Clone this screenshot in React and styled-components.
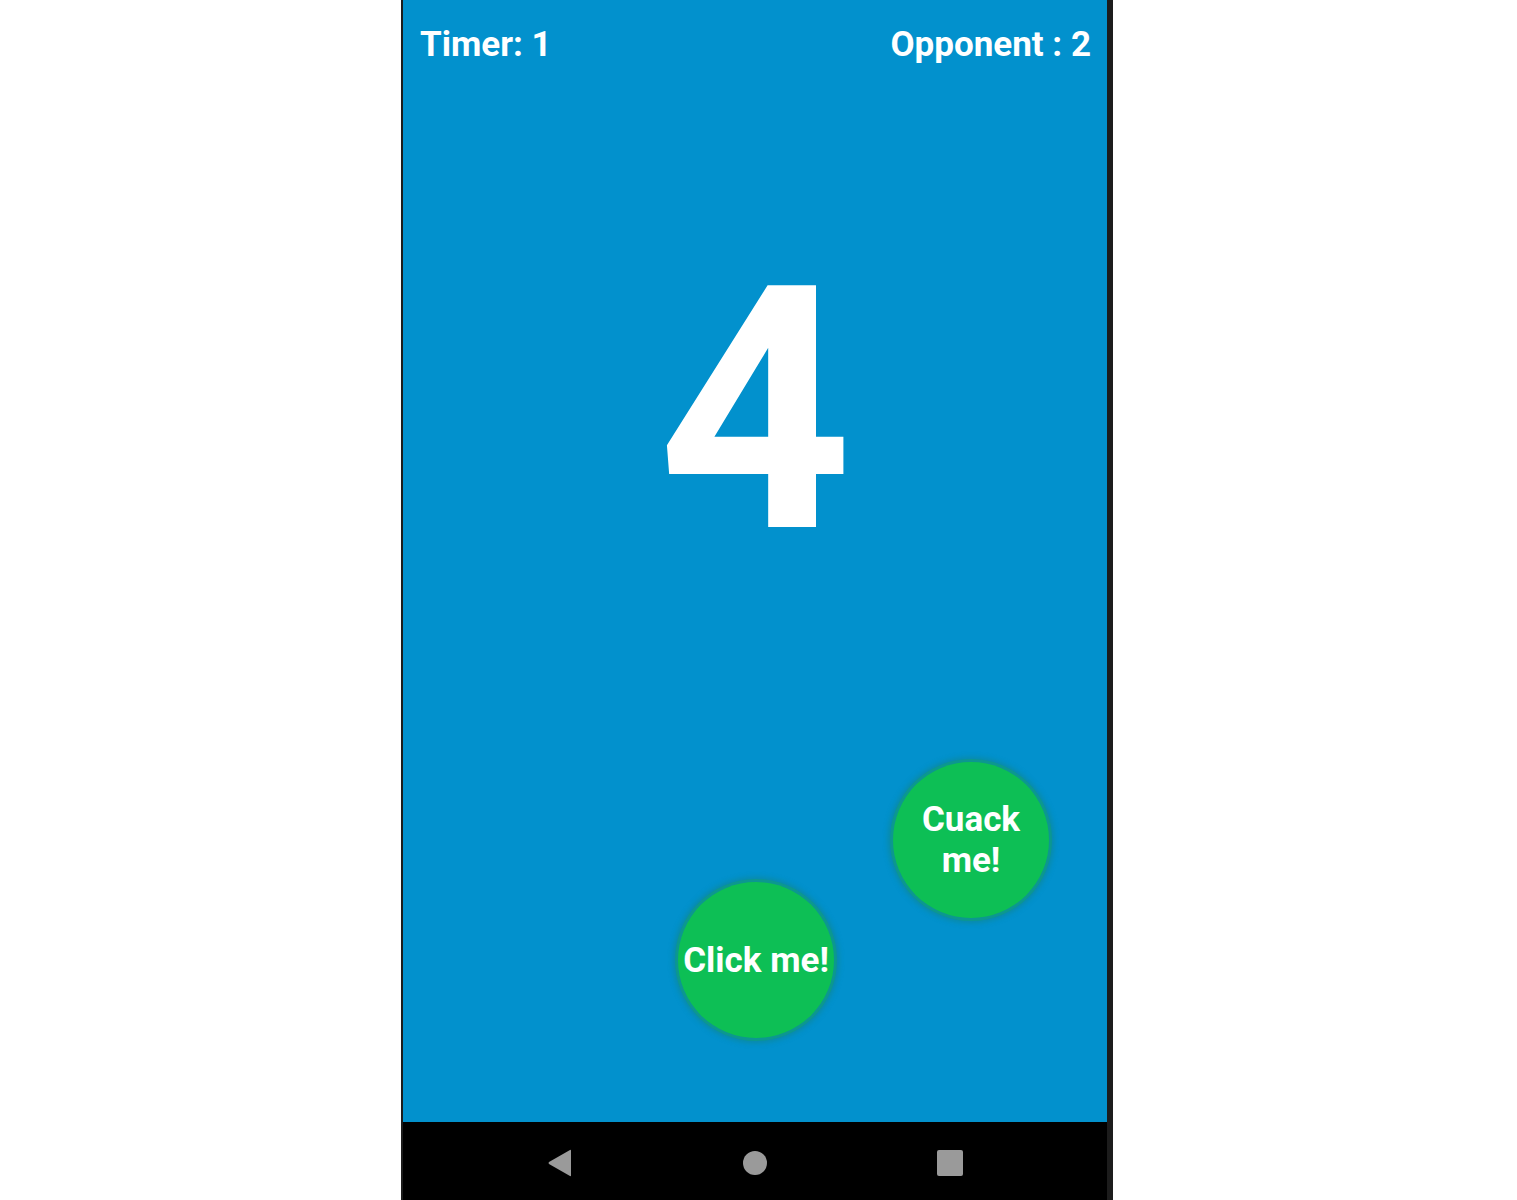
import React from 'react';
import styled, { createGlobalStyle } from 'styled-components';

const GlobalStyle = createGlobalStyle`
  html, body {
    margin: 0;
    padding: 0;
    background: #ffffff;
    font-family: Roboto, "Liberation Sans", sans-serif;
  }
`;

const Page = styled.div`
  display: flex;
  padding-left: 401px;
  height: 1200px;
  overflow: hidden;
`;

const Phone = styled.div`
  width: 704px;
  height: 1200px;
  display: flex;
  flex-direction: column;
  border-left: 2px solid #1c1c1c;
  border-right: 6px solid #1c1c1c;
`;

const Screen = styled.div`
  position: relative;
  flex: 1;
  background: #0291cd;
  display: flex;
  flex-direction: column;
`;

const TopBar = styled.div`
  display: flex;
  justify-content: space-between;
  padding: 25px 16px 0 17px;
`;

const Score = styled.span`
  color: #ffffff;
  font-family: Roboto, sans-serif;
  font-weight: 700;
  font-size: 35px;
  line-height: 40px;
`;

const Counter = styled.div`
  color: #ffffff;
  font-family: Roboto, sans-serif;
  font-weight: 700;
  font-size: 340px;
  line-height: 340px;
  text-align: center;
  margin-top: 176px;
`;

const GameButton = styled.button`
  position: absolute;
  left: ${p => p.x}px;
  top: ${p => p.y}px;
  width: 156px;
  height: 156px;
  border-radius: 50%;
  border: none;
  padding: 0;
  background: #0dbf55;
  box-shadow: 0 0 0 3px #0c9790, 0 0 5px 5px rgba(14, 135, 145, 0.65);
  color: #ffffff;
  font-family: Roboto, sans-serif;
  font-weight: 700;
  font-size: 35px;
  line-height: 41px;
  display: flex;
  align-items: center;
  justify-content: center;
  text-align: center;
  white-space: nowrap;
`;

const NavBar = styled.div`
  height: 78px;
  padding-top: 4px;
  box-sizing: border-box;
  background: #000000;
  display: flex;
  align-items: center;
  justify-content: center;
`;

const NavSlot = styled.div`
  width: 195px;
  display: flex;
  justify-content: center;
  align-items: center;
`;

const App = () => (
  <>
    <GlobalStyle />
    <Page>
      <Phone>
        <Screen>
          <TopBar>
            <Score>Timer: 1</Score>
            <Score>Opponent : 2</Score>
          </TopBar>
          <Counter>4</Counter>
          <GameButton x={275} y={882}>Click me!</GameButton>
          <GameButton x={490} y={762}>Cuack<br />me!</GameButton>
        </Screen>
        <NavBar>
          <NavSlot>
            <svg width="26" height="28" viewBox="0 0 26 28">
              <path d="M24 1.5 L24 26.5 Q24 27.5 23 27 L2 15 Q1 14 2 13 L23 1 Q24 0.5 24 1.5 Z" fill="#9a9a9a" />
            </svg>
          </NavSlot>
          <NavSlot>
            <svg width="26" height="26" viewBox="0 0 26 26">
              <circle cx="13" cy="13" r="12" fill="#9a9a9a" />
            </svg>
          </NavSlot>
          <NavSlot>
            <svg width="26" height="26" viewBox="0 0 26 26">
              <rect x="0" y="0" width="26" height="26" rx="2" fill="#9a9a9a" />
            </svg>
          </NavSlot>
        </NavBar>
      </Phone>
    </Page>
  </>
);

export default App;
